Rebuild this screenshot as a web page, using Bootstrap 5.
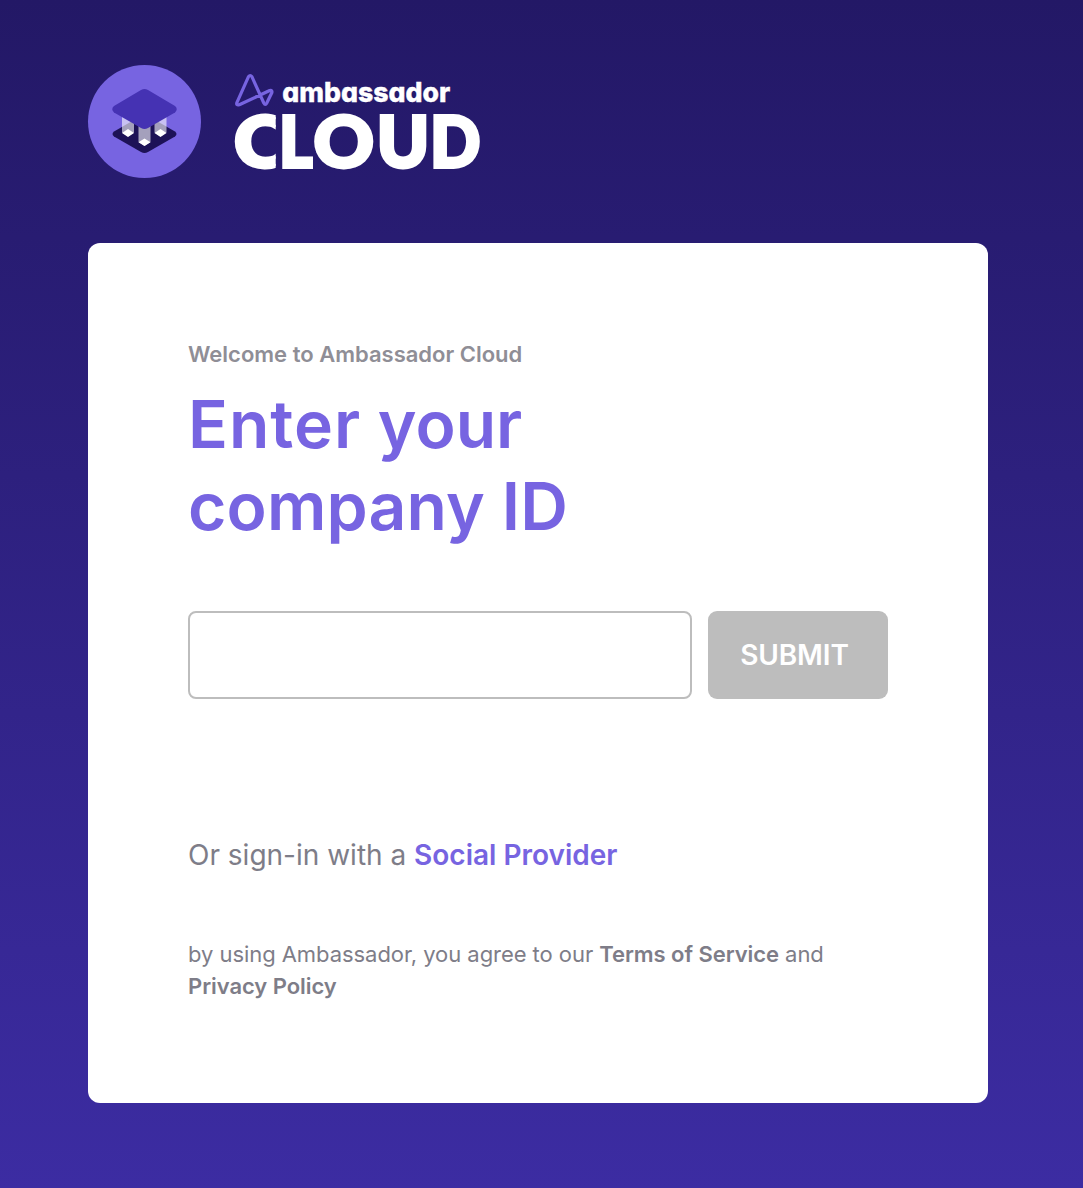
<!DOCTYPE html>
<html lang="en">
<head>
<meta charset="utf-8">
<meta name="viewport" content="width=device-width, initial-scale=1">
<title>Ambassador Cloud</title>
<link href="https://cdn.jsdelivr.net/npm/bootstrap@5.3.0/dist/css/bootstrap.min.css" rel="stylesheet">
<style>
body{font-family:Inter,"Liberation Sans",sans-serif;background:linear-gradient(#231866,#3c2ca2) no-repeat;height:1188px;color:#7e7d88}
.page{width:900px;margin-left:88px;padding-top:65px}
.brand{height:113px;margin-bottom:65px;gap:29px}
.brand svg{overflow:visible}
.product{font-family:Inter,sans-serif;font-feature-settings:"cv11";font-weight:800;font-size:27.5px}
.panel{height:860px;border-radius:12px;padding:95px 100px 0}
.welcome{font-size:22px;line-height:32px;font-weight:600;color:#8f8e96}
.title{font-size:66px;line-height:82px;font-weight:600;color:#7764e1;margin:13px 0 64px}
.title span{letter-spacing:1px}
.title .second{letter-spacing:.15px}
.field{width:504px;height:88px;border:2px solid #bdbdbd;border-radius:8px;flex:none}
.send,.send:disabled{width:180px;height:88px;border:0;border-radius:9px;background:#bdbdbd;color:#fff;font-size:28px;font-weight:600;opacity:1;padding:0 7px 0 0;letter-spacing:-.1px}
.social{font-size:28px;line-height:40px;margin:136px 0 0}
.social a{color:#7764e1;font-weight:600}
.legal{font-size:22px;line-height:32px;margin:63px 0 0;letter-spacing:-.055px}
.legal a{color:#7e7d88;font-weight:600}
</style>
<script src="https://cdn.jsdelivr.net/npm/bootstrap@5.3.0/dist/js/bootstrap.bundle.min.js"></script>
</head>
<body>
<main class="page">
<header class="brand d-flex">
<svg width="113" height="113" viewBox="0 0 113 113" aria-hidden="true">
<circle cx="56.5" cy="56.5" r="56.5" fill="#7764e1"/>
<path d="M26 66.500 53 51Q56.500 49 60 51L87 66.500Q90 69 87 71.500L60 87Q56.500 89 53 87L26 71.500Q23 69 26 66.500Z" fill="#1d1257"/>
<path d="M34 45H46V67.500L40 71.500 34 67.500ZM50.500 50H62.500V77L56.500 81 50.500 77ZM66.500 45H78.500V67.500L72.500 71.500 66.500 67.500Z" fill="#fff" fill-opacity=".6"/>
<path d="M40 64 46 68 40 72 34 68ZM72.500 64 78.500 68 72.500 72 66.500 68ZM56.500 73.500 62.500 77.300 56.500 81 50.500 77.300Z" fill="#fff"/>
<path d="M26 41 53 25Q56.500 23 60 25L87 41Q90.500 44 87 47.500L60 63Q56.500 65 53 63L26 47.500Q22.500 44 26 41Z" fill="#4532b3"/>
</svg>
<svg width="255" height="113" viewBox="230 65 255 113" role="img">
<defs><clipPath id="c-edge"><rect x="230" y="105" width="45.700" height="70"/></clipPath></defs>
<path d="M236.900 102.600 248.500 76.700Q250.200 74.300 251.900 76.700L263.800 103Q265.300 105.800 266.800 103L271.800 92.800Q272.600 89.800 269.700 90.500L239.300 104.800Q235.900 105.600 236.900 102.600Z" fill="none" stroke="#7764e1" stroke-width="3.200" stroke-linejoin="round"/>
<text class="product" x="282.300" y="102" fill="#fff" stroke="#fff" stroke-width=".4" textLength="168" lengthAdjust="spacingAndGlyphs">ambassador</text>
<g fill="#fff" stroke="#fff" stroke-width="3.800" font-family="Lato,sans-serif" font-weight="900" font-size="69.500">
<text x="234.200" y="166.800" textLength="52" lengthAdjust="spacingAndGlyphs" clip-path="url(#c-edge)">C</text>
<text x="279.300" y="166.800" textLength="33" lengthAdjust="spacingAndGlyphs">L</text>
<text x="313.800" y="166.800" textLength="60" lengthAdjust="spacingAndGlyphs">O</text>
<text x="377" y="166.800" textLength="52" lengthAdjust="spacingAndGlyphs">U</text>
<text x="430.200" y="166.800" textLength="50" lengthAdjust="spacingAndGlyphs">D</text>
</g>
</svg>
</header>
<section class="panel bg-white">
<div class="welcome">Welcome to Ambassador Cloud</div>
<h1 class="title"><span>Enter</span> your<br><span class="second">company ID</span></h1>
<form class="d-flex gap-3">
<input class="field form-control" type="text" aria-label="Company ID">
<button class="send btn" type="button" disabled>SUBMIT</button>
</form>
<p class="social">Or sign-in with a <a class="text-decoration-none" href="#">Social Provider</a></p>
<p class="legal">by using Ambassador, you agree to our <a class="text-decoration-none" href="#">Terms of Service</a> and<br><a class="text-decoration-none" href="#">Privacy Policy</a></p>
</section>
</main>
</body>
</html>
